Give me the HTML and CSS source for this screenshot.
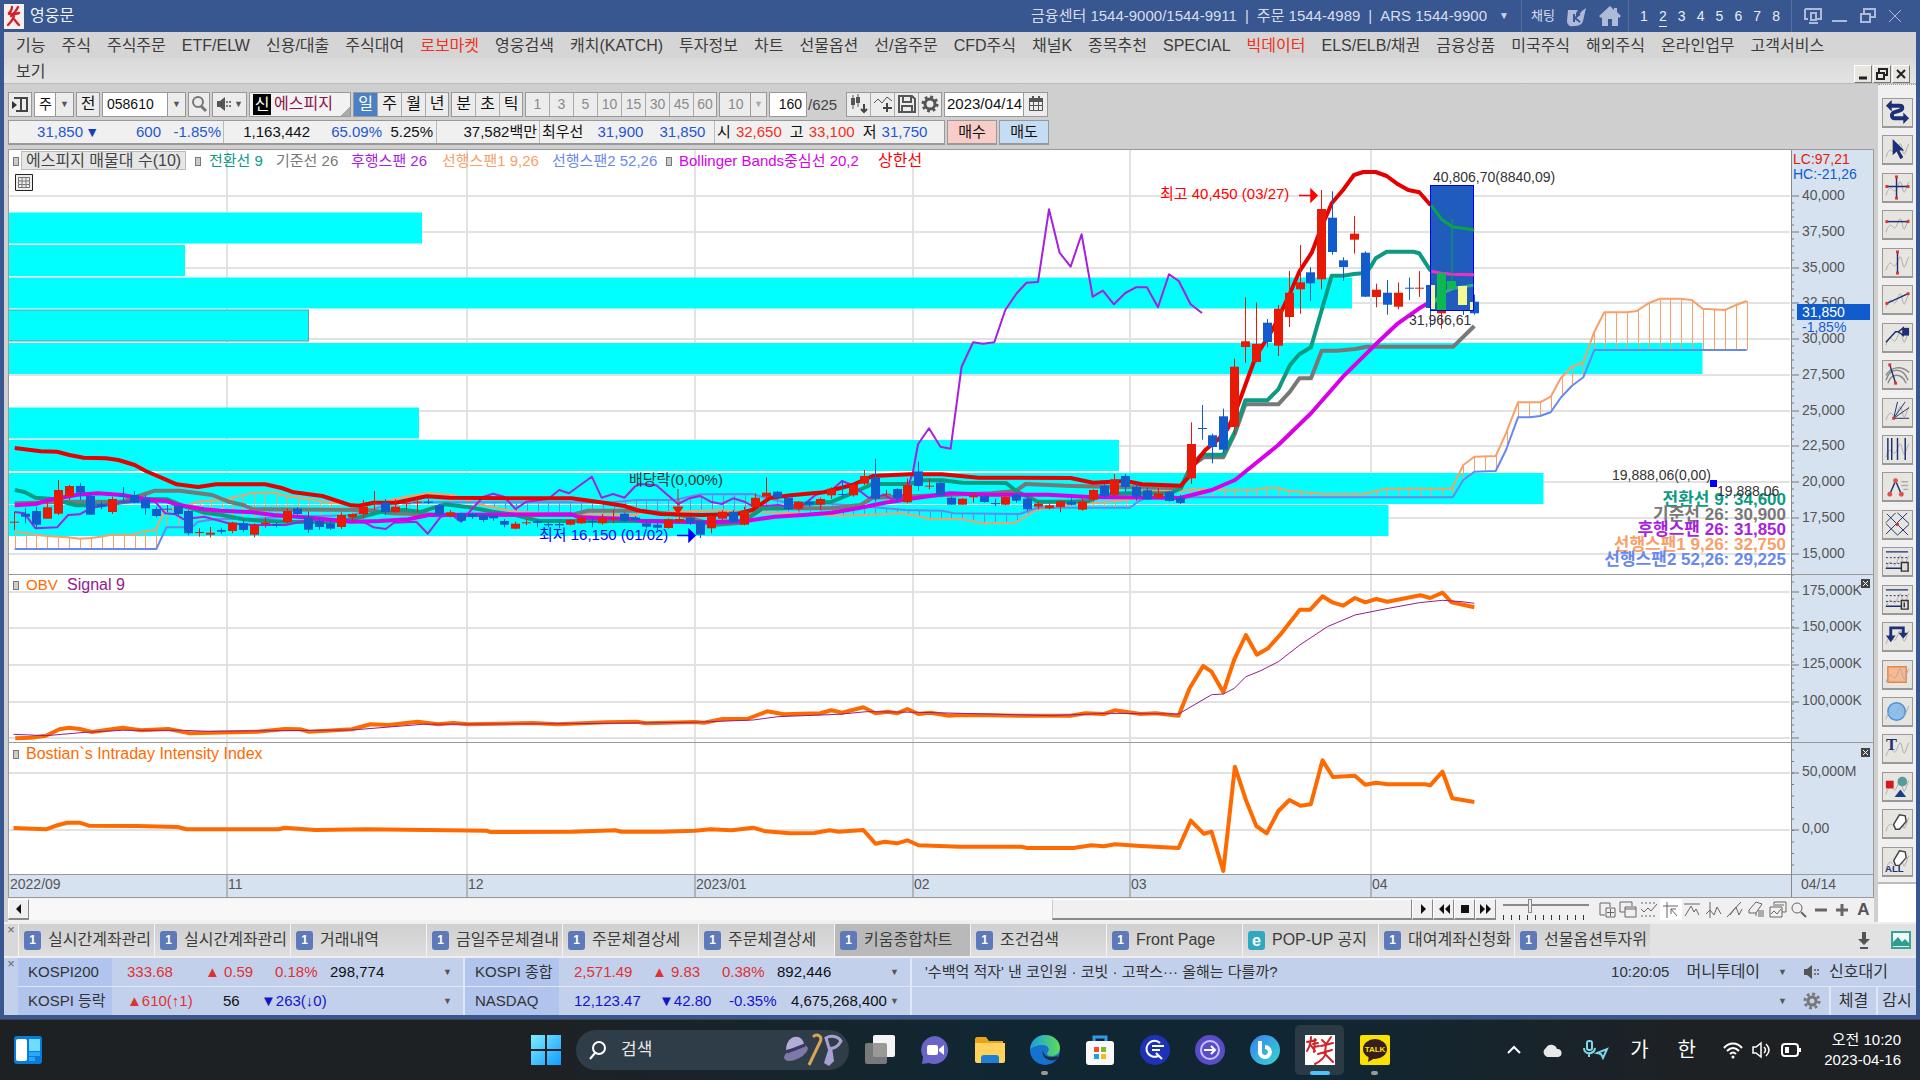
FILE: index.html
```html
<!DOCTYPE html>
<html lang="ko">
<head>
<meta charset="utf-8">
<meta name="viewport" content="width=device-width, initial-scale=1">
<title>영웅문</title>
<link rel="stylesheet" href="styles.css">
</head>
<body>
<div class="window">
  <header class="titlebar">
    <svg class="logo" viewBox="0 0 20 25"><path fill="#f6efee" d="M0 0h20v25H0z"/><path fill="none" stroke="#d3222a" stroke-width="2.4" stroke-linecap="round" d="M8 3c0 3-2 5-3 7m9-7c-2 4-4 7-7 9m-2-3c4 2 7 1 10 0M10 9c1 5-3 9-6 12m5-7c2 2 4 5 6 7"/></svg>
    <span class="app-name">영웅문</span>
    <span class="phones"><span>금융센터 1544-9000/1544-9911</span><span>|</span><span>주문 1544-4989</span><span>|</span><span>ARS 1544-9900</span></span>
    <span class="caret light">▼</span>
    <div class="title-group">
      <a href="#chat" class="chat">채팅</a>
      <svg width="20" height="22" viewBox="0 0 20 22"><path fill="#aebbd8" d="M1 5h10l-2 3v5l6-7 4-3-3 13c-1 4-5 5-9 5-4 1-7-1-7-5z"/><path stroke="#385690" stroke-width="2" fill="none" d="M7 9v8m6-8-5 4 5 4"/></svg>
      <svg width="22" height="20" viewBox="0 0 22 20"><path fill="#aebbd8" d="M11 0 0 10l2 2 1-1v9h6v-7h4v7h6v-9l1 1 2-2-4-4V2h-3v2z"/></svg>
    </div>
    <nav class="screens"><a href="#1">1</a><a href="#2" class="on">2</a><a href="#3">3</a><a href="#4">4</a><a href="#5">5</a><a href="#6">6</a><a href="#7">7</a><a href="#8">8</a></nav>
    <div class="win-buttons">
      <button aria-label="화면"><svg width="18" height="18" viewBox="0 0 18 18"><path fill="none" stroke="#aebbd8" stroke-width="2" d="M1 2h16v10h-4M1 2v10h3M7 6h5v7H7zM5 16h9"/></svg></button>
      <button aria-label="최소화"><svg width="18" height="18" viewBox="0 0 18 18"><path stroke="#aebbd8" stroke-width="2" d="M1 14h15"/></svg></button>
      <button aria-label="복원"><svg width="18" height="18" viewBox="0 0 18 18"><path fill="none" stroke="#aebbd8" stroke-width="2" d="M5 6V2h11v8h-4M2 7h9v8H2z"/></svg></button>
      <button aria-label="닫기"><svg width="18" height="18" viewBox="0 0 18 18"><path stroke="#aebbd8" stroke-width="1" d="M3 3l12 12M15 3 3 15"/></svg></button>
    </div>
  </header>

  <nav class="menu">
    <a href="#m">기능</a><a href="#m">주식</a><a href="#m">주식주문</a><a href="#m">ETF/ELW</a><a href="#m">신용/대출</a><a href="#m">주식대여</a><a href="#m" class="hot">로보마켓</a><a href="#m">영웅검색</a><a href="#m">캐치(KATCH)</a><a href="#m">투자정보</a><a href="#m">차트</a><a href="#m">선물옵션</a><a href="#m">선/옵주문</a><a href="#m">CFD주식</a><a href="#m">채널K</a><a href="#m">종목추천</a><a href="#m">SPECIAL</a><a href="#m" class="hot">빅데이터</a><a href="#m">ELS/ELB/채권</a><a href="#m">금융상품</a><a href="#m">미국주식</a><a href="#m">해외주식</a><a href="#m">온라인업무</a><a href="#m">고객서비스</a>
  </nav>
  <div class="menu-second">
    <a href="#m">보기</a>
    <div class="mdi">
      <button aria-label="창 최소화"><svg width="16" height="16" viewBox="0 0 16 16"><path stroke="#222" stroke-width="3" d="M4 12h8"/></svg></button>
      <button aria-label="창 복원"><svg width="16" height="16" viewBox="0 0 16 16"><path fill="none" stroke="#222" stroke-width="2" d="M5 6V3h8v6h-3M3 7h7v6H3z"/></svg></button>
      <button aria-label="창 닫기"><svg width="16" height="16" viewBox="0 0 16 16"><path stroke="#222" stroke-width="2" d="M4 4l8 8m0-8-8 8"/></svg></button>
    </div>
  </div>

  <main class="workspace">
    <section class="work">
      <div class="toolbar">
        <button class="tb w24" aria-label="목록"><svg width="18" height="18" viewBox="0 0 18 18"><path fill="none" stroke="#444" stroke-width="2" d="M5 3h11v13H5M10 3v13M3 3h13"/><path fill="#333" d="M1 6l5 4-5 4z"/></svg></button>
        <span class="combo w40"><select aria-label="구분"><option>주</option></select><i class="caret">▼</i></span>
        <button class="tb w24">전</button>
        <span class="combo w86"><input aria-label="종목코드" value="058610"><i class="caret">▼</i></span>
        <button class="tb w22" aria-label="검색"><svg width="18" height="18" viewBox="0 0 18 18"><circle cx="8" cy="7" r="5" fill="none" stroke="#777" stroke-width="2"/><path stroke="#777" stroke-width="3" d="M11 11l5 5"/></svg></button>
        <button class="tb w35" aria-label="소리"><svg width="16" height="16" viewBox="0 0 16 16"><path fill="#555" d="M1 5h3l5-4v14l-5-4H1z"/><path stroke="#777" stroke-width="2" stroke-dasharray="2 2" d="M11 5v8M14 5v8"/></svg><i class="caret small">▼</i></button>
        <span class="stock"><b>신</b>에스피지</span>
        <span class="seg big"><button class="on">일</button><button>주</button><button>월</button><button>년</button></span>
        <span class="seg big"><button>분</button><button>초</button><button>틱</button></span>
        <span class="seg dim"><button>1</button><button>3</button><button>5</button><button>10</button><button>15</button><button>30</button><button>45</button><button>60</button></span>
        <span class="combo dim w48"><select aria-label="간격"><option>10</option></select><i class="caret">▼</i></span>
        <span class="count"><input aria-label="봉 개수" value="160"></span><span class="total">/625</span>
        <span class="seg icons">
          <button aria-label="지표 추가"><svg width="20" height="20" viewBox="0 0 20 20"><path stroke="#555" stroke-width="1" d="M4 1v14M9 0v13"/><path fill="#555" d="M2 4h4v7H2zM7 3h4v6H7z"/><path fill="none" stroke="#444" stroke-width="2" d="M15 10v8m-3-3 3 3 3-3"/></svg></button>
          <button aria-label="비교"><svg width="20" height="20" viewBox="0 0 20 20"><path fill="none" stroke="#555" d="M1 9l4-4 4 4 5-6 5 4"/><path stroke="#444" stroke-width="2" d="M14 9v9m-4-4h9"/></svg></button>
          <button aria-label="저장"><svg width="18" height="18" viewBox="0 0 18 18"><path fill="none" stroke="#555" stroke-width="2" d="M1 1h13l3 3v13H1zM5 1v6h8V1M4 17v-6h10v6"/></svg></button>
          <button aria-label="설정"><svg width="18" height="18" viewBox="0 0 18 18"><circle cx="9" cy="9" r="5" fill="none" stroke="#555" stroke-width="3"/><circle cx="9" cy="9" r="7" fill="none" stroke="#555" stroke-width="3" stroke-dasharray="2.7 2.8"/></svg></button>
        </span>
        <span class="date"><input aria-label="날짜" value="2023/04/14"><button aria-label="달력"><svg width="16" height="16" viewBox="0 0 16 16"><path fill="none" stroke="#555" d="M1.500 3.500h13v11h-13zM5.500 6v8M10.500 6v8M2 9.500h12"/><path fill="#555" d="M1 2h14v4H1zM4 0h2v3H4zM10 0h2v3h-2z"/></svg></button></span>
      </div>

      <div class="quote">
        <div class="quote-box">
          <div class="cell"><span class="dn w78">31,850</span><span class="dn arrow">▼</span><span class="dn w62">600</span><span class="dn w60">-1.85%</span></div>
          <div class="cell"><span class="w86">1,163,442</span><span class="dn w72">65.09%</span><span class="w50">5.25%</span></div>
          <div class="cell"><span class="w98">37,582백만</span></div>
          <div class="cell"><span>최우선</span><span class="dn w56">31,900</span><span class="dn w62">31,850</span></div>
          <div class="cell last"><span>시</span><span class="up w50">32,650</span><span class="gap">고</span><span class="up w50">33,100</span><span class="gap">저</span><span class="dn w50">31,750</span></div>
        </div>
        <button class="buy">매수</button><button class="sell">매도</button>
      </div>

      <svg id="chart" class="chart" viewBox="8 149 1866 749" role="img" aria-label="에스피지 일봉 차트"></svg>

      <div class="scroller">
        <button class="raised" aria-label="왼쪽"><svg width="14" height="14" viewBox="0 0 14 14"><path fill="#111" d="M9 2v10L4 7z"/></svg></button>
        <div class="track"><div class="thumb"></div></div>
        <button class="raised" aria-label="오른쪽"><svg width="14" height="14" viewBox="0 0 14 14"><path fill="#111" d="M5 2v10l5-5z"/></svg></button>
        <button class="raised" aria-label="뒤로"><svg width="14" height="14" viewBox="0 0 14 14"><path fill="#111" d="M7 2v10L2 7zM13 2v10L8 7z"/></svg></button>
        <button class="raised" aria-label="정지"><svg width="14" height="14" viewBox="0 0 14 14"><path fill="#111" d="M3 3h8v8H3z"/></svg></button>
        <button class="raised" aria-label="앞으로"><svg width="14" height="14" viewBox="0 0 14 14"><path fill="#111" d="M1 2v10l5-5zM7 2v10l5-5z"/></svg></button>
        <input class="speed" type="range" min="0" max="10" value="3" aria-label="속도">
        <div class="minis">
          <button aria-label="추가"><svg viewBox="0 0 18 18"><path d="M12 6V2H2v12h5M8 7h9v9H8zM12.500 8v7M9 11.500h7"/></svg></button>
          <button aria-label="겹치기"><svg viewBox="0 0 18 18"><path d="M6 11H1V1h12v4M6 6h11v10H6zM6 8h11"/></svg></button>
          <button aria-label="범위"><svg viewBox="0 0 18 18"><path stroke-dasharray="2 2" d="M1 2h16M1 15h16"/><path d="M1 8l3 3 4-4 3 3 6-7"/></svg></button>
          <button aria-label="십자선" class="pressed"><svg viewBox="0 0 18 18"><path d="M5 1v16M1 5h15M15 15 9 8m0 5V8h5"/></svg></button>
          <button aria-label="수평선"><svg viewBox="0 0 18 18"><path d="M1 3h16M2 15l6-10 3 6 2-3 3 6"/></svg></button>
          <button aria-label="수직선"><svg viewBox="0 0 18 18"><path d="M5 1v16M1 13l4-4 4 5 3-8 4 7"/></svg></button>
          <button aria-label="추세선"><svg viewBox="0 0 18 18"><path d="M1 16 15 1M4 14l6-8 3 8 3-6"/></svg></button>
          <button aria-label="모두 지우기"><svg viewBox="0 0 18 18"><path d="M2 9 9 1l6 2-6 9H2zM9 12v3M12 9v7m2-7v7m2-7v7"/></svg></button>
          <button aria-label="차트 겹침"><svg viewBox="0 0 18 18"><path d="M5 5V1h12v10h-4M1 6h12v10H1zM2 13l3-3 3 3 4-5M6 4h9"/></svg></button>
          <button aria-label="확대"><svg viewBox="0 0 18 18"><circle cx="7" cy="7" r="5"/><path stroke-width="2" d="M11 11l5 5"/></svg></button>
          <button aria-label="축소"><svg viewBox="0 0 18 18"><path stroke-width="3" d="M3 9h12"/></svg></button>
          <button aria-label="늘리기"><svg viewBox="0 0 18 18"><path stroke-width="3" d="M3 9h12M9 3v12"/></svg></button>
          <button aria-label="자동"><b>A</b></button>
        </div>
      </div>
    </section>
    <aside class="side"><div class="tools" id="tools"></div></aside>
  </main>

  <nav class="tabs">
    <span class="grip">×</span>
    <a href="#t"><i>1</i>실시간계좌관리</a><a href="#t"><i>1</i>실시간계좌관리</a><a href="#t"><i>1</i>거래내역</a><a href="#t"><i>1</i>금일주문체결내</a><a href="#t"><i>1</i>주문체결상세</a><a href="#t"><i>1</i>주문체결상세</a><a href="#t" class="on"><i>1</i>키움종합차트</a><a href="#t"><i>1</i>조건검색</a><a href="#t"><i>1</i>Front Page</a><a href="#t"><i class="web">e</i>POP-UP 공지</a><a href="#t"><i>1</i>대여계좌신청화</a><a href="#t"><i>1</i>선물옵션투자위</a>
    <span class="tabs-end">
      <svg width="14" height="18" viewBox="0 0 14 18"><path fill="#555" d="M5 1h4v7h4l-6 6-6-6h4zM3 16h8v2H3z"/></svg>
      <svg width="20" height="18" viewBox="0 0 20 18"><path fill="#eefaf8" stroke="#3aa394" stroke-width="2" d="M1 1h18v16H1z"/><path fill="#2e9f8e" d="M2 15v-4l5-5 4 5 3-3 4 4v3z"/></svg>
    </span>
  </nav>

  <section class="ticker">
    <span class="grip">×</span>
    <div class="index"><b>KOSPI200</b><span class="up2">333.68</span><span class="up2 s2">▲ 0.59</span><span class="up2 s3">0.18%</span><span class="s4">298,774</span><i class="caret">▼</i></div>
    <div class="index"><b>KOSPI 종합</b><span class="up2">2,571.49</span><span class="up2 s2">▲ 9.83</span><span class="up2 s3">0.38%</span><span class="s4">892,446</span><i class="caret">▼</i></div>
    <div class="news"><a href="#n">'수백억 적자' 낸 코인원 · 코빗 · 고팍스··· 올해는 다를까?</a><time>10:20:05</time><span class="src">머니투데이</span><i class="caret">▼</i><svg width="18" height="16" viewBox="0 0 18 16"><path fill="#555" d="M1 5h3l5-4v14l-5-4H1z"/><path stroke="#777" stroke-width="2" stroke-dasharray="2 2" d="M12 5v8M15 5v8"/></svg><span class="sig">신호대기</span></div>
    <div class="index"><b>KOSPI 등락</b><span class="up2 u2">▲610(↑1)</span><span class="u3">56</span><span class="dn2">▼263(↓0)</span><i class="caret">▼</i></div>
    <div class="index"><b>NASDAQ</b><span class="dn2">12,123.47</span><span class="dn2 s5">▼42.80</span><span class="dn2 s6">-0.35%</span><span class="s7">4,675,268,400</span><i class="caret">▼</i></div>
    <div class="news"><span class="fill"></span><i class="caret">▼</i><svg width="18" height="18" viewBox="0 0 18 18"><circle cx="9" cy="9" r="4" fill="none" stroke="#777" stroke-width="3"/><circle cx="9" cy="9" r="7" fill="none" stroke="#777" stroke-width="3" stroke-dasharray="2.7 2.8"/></svg><a href="#a" class="foot">체결</a><a href="#b" class="foot">감시</a></div>
  </section>
</div>

<footer class="taskbar">
  <div class="tk-left"><button aria-label="위젯"><svg width="30" height="30" viewBox="0 0 30 30"><rect x="1" y="1" width="28" height="28" rx="3" fill="#0c7bd6"/><rect x="3" y="4" width="11" height="22" rx="2" fill="#fff"/><path fill="#6fdcff" d="M16 4h11v12H16z"/><path fill="#28a8ff" d="M16 17h11v4H16zM16 22h6v4h-6z"/></svg></button></div>
  <div class="tk-center">
    <button aria-label="시작"><svg width="30" height="30" viewBox="0 0 30 30"><defs><linearGradient id="wn" x2="1" y2="1"><stop stop-color="#7fecff"/><stop offset="1" stop-color="#119bff"/></linearGradient></defs><path fill="url(#wn)" d="M0 0h14v14H0zM16 0h14v14H16zM0 16h14v14H0zM16 16h14v14H16z"/></svg></button>
    <label class="search"><svg width="20" height="20" viewBox="0 0 20 20"><circle cx="11" cy="8" r="6" fill="none" stroke="#fff" stroke-width="2"/><path stroke="#fff" stroke-width="2" d="M7 13l-5 6"/></svg><input placeholder="검색" aria-label="검색"><svg width="60" height="34" viewBox="0 0 60 34"><ellipse cx="13" cy="20" rx="13" ry="6" fill="#7d78a8" transform="rotate(-28 13 20)"/><path fill="#b4acd8" d="M3 17c0-14 13-17 17-9l2 5z"/><path stroke="#3b375f" stroke-width="3" d="M4 19l18-7"/><path fill="none" stroke="#d9a35a" stroke-width="3" d="M26 32 37 9c3-6-3-9-7-5"/><path fill="none" stroke="#a9a0d2" stroke-width="3" d="M43 5c5-3 12-2 15 3-3 6-8 8-12 7z"/><path fill="#a9a0d2" d="M46 14l-5 16 5 3 5-5-2-14z"/></svg></label>
    <button aria-label="작업 보기"><svg width="30" height="30" viewBox="0 0 30 30"><rect x="8" width="22" height="22" rx="2" fill="#f4f4f4"/><rect y="8" width="22" height="21" rx="2" fill="#888" opacity=".85"/></svg></button>
    <button aria-label="채팅"><svg width="30" height="30" viewBox="0 0 30 30"><path fill="#6a64c8" d="M15 1a14 14 0 1 1-6 27l-7 1 1-7A14 14 0 0 1 15 1z"/><rect x="7" y="10" width="11" height="10" rx="2" fill="#fff"/><path fill="#fff" d="M19 14l5-4v10l-5-4z"/></svg></button>
    <button aria-label="탐색기"><svg width="30" height="30" viewBox="0 0 30 30"><path fill="#e9a21c" d="M0 4c0-1 1-2 2-2h9l3 4h14v8H0z"/><path fill="#ffd25e" d="M0 8h30v18c0 1-1 2-2 2H2c-1 0-2-1-2-2z"/><path fill="#1d7fd6" d="M6 28v-5c0-2 1-3 3-3h12c2 0 3 1 3 3v5z"/></svg></button>
    <button aria-label="Edge" class="run"><svg width="30" height="30" viewBox="0 0 30 30"><defs><linearGradient id="eg" x2="1"><stop stop-color="#1b9de2"/><stop offset="1" stop-color="#5fdc55"/></linearGradient></defs><circle cx="15" cy="15" r="15" fill="#1573cf"/><path fill="url(#eg)" d="M0 14C1 5 8 0 15 0c9 0 15 6 15 13 0 5-4 8-8 8-5 0-6-2-4-4 2-3 0-7-5-7C8 10 3 12 0 14z"/><path fill="#1e2c36" d="M13 15c0 6 6 9 14 6l1 2c-3 3-8 3-11 1-4-2-5-6-4-9z"/></svg></button>
    <button aria-label="스토어"><svg width="30" height="30" viewBox="0 0 30 30"><path fill="none" stroke="#2d9de8" stroke-width="3" d="M9 8V2h12v6"/><rect x="1" y="6" width="28" height="24" rx="3" fill="#f8f8f8"/><path fill="#f04f26" d="M9 12h5v5H9z"/><path fill="#7db82b" d="M16 12h5v5h-5z"/><path fill="#18a3e8" d="M9 19h5v5H9z"/><path fill="#fbb813" d="M16 19h5v5h-5z"/></svg></button>
    <button aria-label="검색 앱"><svg width="30" height="30" viewBox="0 0 30 30"><circle cx="15" cy="15" r="15" fill="#1e32b8"/><path fill="none" stroke="#fff" stroke-width="2" d="M20 8a8 8 0 1 0-2 13M16 18l6 6M12 11h12M12 15h8"/></svg></button>
    <button aria-label="전송"><svg width="30" height="30" viewBox="0 0 30 30"><circle cx="15" cy="15" r="15" fill="#5a4cc8"/><circle cx="15" cy="15" r="9" fill="none" stroke="#c9c2ff" stroke-width="2"/><path fill="none" stroke="#fff" stroke-width="2" d="M9 15h11m-4-4 4 4-4 4"/></svg></button>
    <button aria-label="빅스비"><svg width="30" height="30" viewBox="0 0 30 30"><defs><linearGradient id="bx" x2="1" y2="1"><stop stop-color="#3a7ff0"/><stop offset="1" stop-color="#35d8d0"/></linearGradient></defs><circle cx="15" cy="15" r="15" fill="url(#bx)"/><path fill="none" stroke="#fff" stroke-width="4" d="M10 6v10a5 5 0 1 0 5-4"/></svg></button>
    <button aria-label="영웅문" class="active"><svg width="30" height="30" viewBox="0 0 30 30"><path fill="#fff" d="M0 0h30v30H0z"/><path fill="none" stroke="#d3222a" stroke-width="2" stroke-linecap="round" d="M2 7l9-2M6 2C6 8 4 13 2 16m3-7 5 7M10 4l-1 13M8 9l5-1m-4 4 5-1M17 5l3 3m6-6-4 6m-6 3 12-3m-7 1-1 9m-7 1 14-4m-6 2c0 4-5 9-11 12m9-11 9 9"/></svg></button>
    <button aria-label="카카오톡" class="run"><svg width="30" height="30" viewBox="0 0 30 30"><rect width="30" height="30" rx="2" fill="#fae100"/><ellipse cx="15" cy="14" rx="12" ry="10" fill="#371d1e"/><path fill="#371d1e" d="M9 20l-1 7 7-4z"/><text x="15" y="17" text-anchor="middle" font-size="8" font-weight="bold" fill="#fae100">TALK</text></svg></button>
  </div>
  <div class="tk-right">
    <svg width="14" height="10" viewBox="0 0 14 10"><path fill="none" stroke="#fff" stroke-width="2" d="M1 8l6-6 6 6"/></svg>
    <svg width="20" height="14" viewBox="0 0 20 14"><path fill="#e8e8e8" d="M5 14a5 5 0 0 1-1-9 6 6 0 0 1 11 1 4 4 0 0 1 1 8z"/></svg>
    <svg width="26" height="20" viewBox="0 0 26 20"><rect x="4" y="1" width="5" height="9" rx="2" fill="none" stroke="#7fd6e8" stroke-width="2"/><path fill="none" stroke="#7fd6e8" stroke-width="2" d="M1 8c0 7 10 7 11 0M6 14v3M24 9l-4 9-2-4-4-1z"/></svg>
    <span>가</span><span>한</span>
    <svg class="near" width="20" height="18" viewBox="0 0 20 18"><path fill="none" stroke="#fff" stroke-width="2" d="M1 7c5-6 13-6 18 0M4 10c4-4 8-4 12 0M7 13c2-2 4-2 6 0"/><circle cx="10" cy="16" r="1.500" fill="#fff"/></svg>
    <svg class="near" width="20" height="18" viewBox="0 0 20 18"><path fill="none" stroke="#fff" stroke-width="1.500" d="M1 6h3l5-4v14l-5-4H1zM12 6c2 2 2 4 0 6M14 3c4 4 4 8 0 12"/></svg>
    <svg class="near" width="20" height="16" viewBox="0 0 20 16"><rect x="1" y="2" width="16" height="12" rx="3" fill="none" stroke="#fff" stroke-width="2"/><path fill="#fff" d="M4 5h4v6H4zM18 6h2v4h-2z"/></svg>
    <div class="clock"><span>오전 10:20</span><span>2023-04-16</span></div>
  </div>
</footer>
<script src="chart.js"></script>
</body>
</html>
```
FILE: styles.css
```css
* { box-sizing: border-box; }
body {
  margin: 0;
  min-height: 100vh;
  display: flex;
  flex-direction: column;
  background: #1e2124;
  font: 16px/20px "Liberation Sans", "Noto Sans CJK KR", sans-serif;
  color: #3c3c3c;
}
a { color: inherit; text-decoration: none; white-space: nowrap; }
button, input, select { font: inherit; color: inherit; padding: 0; margin: 0; border: 0; background: none; border-radius: 0; }
button { display: inline-flex; align-items: center; justify-content: center; }
svg { flex: none; }
.caret { font-style: normal; font-size: 9px; line-height: 12px; color: #555; flex: none; }
.caret.light { color: #c8d2e6; font-size: 10px; }

.window { flex: 1; display: flex; flex-direction: column; background: #385690; padding: 0 4px 4px; border-bottom: 1px solid #444; }

/* title bar */
.titlebar { display: flex; align-items: center; height: 32px; color: #d6deee; }
.logo { width: 20px; height: 25px; margin-right: 6px; }
.app-name { font-size: 16px; color: #f0f3f9; }
.phones { display: flex; gap: 8px; margin-left: auto; font-size: 15px; white-space: nowrap; }
.titlebar > .caret { width: 34px; text-align: center; }
.title-group { display: flex; align-items: center; gap: 12px; width: 107px; height: 32px; padding-left: 9px; border-left: 1px solid #55709f; }
.chat { font-size: 13px; }
.screens { display: flex; width: 164px; height: 32px; align-items: center; justify-content: space-between; padding: 0 11px; border: solid #55709f; border-width: 0 1px; font-size: 14px; color: #e8edf6; }
.screens .on { border-bottom: 1px solid #e8edf6; }
.win-buttons { display: flex; justify-content: space-between; width: 124px; padding: 0 12px; }

/* menu */
.menu { display: flex; gap: 16px; height: 26px; padding: 4px 12px 0; background: #d5d5d5; overflow: hidden; }
.hot { color: #f03020; }
.menu-second { display: flex; justify-content: space-between; height: 26px; padding: 4px 6px 0 12px; background: linear-gradient(#d9d9d9, #e3e3e3); border-bottom: 1px solid #bbb; }
.mdi { display: flex; align-items: flex-end; gap: 1px; }
.mdi button { width: 18px; height: 18px; background: #e8e6df; border: 1px solid; border-color: #fff #777 #777 #fff; }

/* work area */
.workspace { display: flex; background: #cfcfcf; }
.work { flex: 1; min-width: 0; }
.toolbar { display: flex; align-items: center; gap: 2px; height: 36px; padding: 7px 4px 3px; color: #111; }
.toolbar > * { height: 25px; flex: none; border: 1px solid #999; background: #ececec; }
.toolbar > .total { border: 0; background: none; font-size: 15px; width: 36px; padding: 3px 0; color: #444; margin-left: -1px; }
.w22 { width: 22px; } .w24 { width: 24px; } .w35 { width: 35px; } .w40 { width: 40px; }
.w48 { width: 48px; } .w86 { width: 84px; }
.small { margin-left: 2px; }
.combo { display: flex; align-items: center; background: #fff; }
.combo input, .combo select { flex: 1; min-width: 0; padding-left: 4px; appearance: none; font-size: 14px; height: 100%; }
.combo .caret { width: 18px; height: 23px; line-height: 23px; text-align: center; background: #ececec; border-left: 1px solid #999; }
.combo.dim, .combo.dim select, .seg.dim { color: #8a8a8a; background: #ececec; }
.combo.dim select { padding-left: 8px; font-size: 14px; }
.combo.dim .caret { color: #aaa; width: 16px; }
.stock { display: flex; align-items: center; gap: 3px; width: 102px; padding-left: 3px; color: #90104a; background: linear-gradient(135deg, #f2f2f2 92%, #aaa 92%) !important; }
.stock b { width: 18px; line-height: 21px; background: #000; color: #fff; font-weight: 400; text-align: center; }
.seg { display: flex; }
.seg button { width: 24px; border-right: 1px solid #aaa; font-size: 15px; }
.seg.dim button { width: 24px; font-size: 14px; }
.seg button:last-child { border-right: 0; width: 22px; }
.seg .on { background: #4a80c4; color: #fff; }
.seg.big button { font-size: 16px; }
.count { width: 38px; background: #fff !important; }
.count input { width: 100%; height: 100%; text-align: right; padding-right: 4px; font-size: 14px; }
.date { display: flex; background: #fff !important; width: 104px; }
.date input { flex: 1; min-width: 0; padding-left: 2px; font-size: 15px; }
.date button { width: 24px; border-left: 1px solid #999; background: #ececec; }

.quote { display: flex; gap: 2px; height: 29px; padding: 0 4px 4px; font-size: 15px; color: #111; }
.quote-box { display: flex; width: 937px; background: #f0f0f0; border: 1px solid #999; border-bottom-width: 2px; }
.cell { display: flex; align-items: center; padding: 0 2px; border-right: 1px solid #bbb; white-space: nowrap; }
.cell span { text-align: right; flex: none; }
.cell.last { border: 0; flex: 1; }
.cell:nth-child(1) { width: 215px; } .cell:nth-child(2) { width: 213px; }
.cell:nth-child(3) { width: 103px; } .cell:nth-child(4) { width: 175px; }
.w78 { width: 72px; } .cell .arrow { width: 16px; font-size: 14px; color: #1040c0; }
.w62 { width: 62px; } .w60 { width: 60px; } .cell .w86 { width: 84px; } .w72 { width: 72px; } .w50 { width: 51px; } .w98 { width: 98px; } .w56 { width: 60px; }
.gap { margin-left: 8px; }
.up { color: #f03020; } .dn { color: #2457d0; }
.buy, .sell { width: 50px; font-size: 15px; border: 1px solid #999; border-bottom-width: 2px; background: #f8cdc8; }
.sell { background: #c4dcf4; }

.chart { display: block; width: calc(100% - 8px); height: auto; margin-left: 4px; }
.chart text { font: 15px "Liberation Sans", "Noto Sans CJK KR", sans-serif; }
.chart .axis text { font-size: 14px; fill: #555; }
.chart .value { font-size: 14px; }
.chart .wide { font-size: 16px; }
.chart .summary text { font-size: 17px; font-weight: bold; text-anchor: end; }

.scroller { display: flex; height: 24px; margin: 0 4px; padding: 1px 0 2px; background: #f0f0f0; align-items: stretch; }
.raised { width: 21px; background: #f0f0f0; border: 1px solid; border-color: #fff #888 #888 #fff; border-bottom-width: 2px; }
.track { flex: 1; background: #f8f8f8; display: flex; justify-content: flex-end; }
.thumb { width: 26%; background: #f0f0f0; border: 1px solid; border-color: #fff #888 #888 #ccc; border-bottom-width: 2px; }
.speed { appearance: none; width: 86px; margin: 0 7px; background: repeating-linear-gradient(90deg, #333 0 1px, transparent 1px 8px) 0 100% / 100% 5px no-repeat, linear-gradient(#888, #888) 0 5px / 100% 2px no-repeat; }
.speed::-webkit-slider-thumb { appearance: none; width: 4px; height: 14px; margin-bottom: 8px; background: #eee; border: 1px solid #888; }
.minis { display: flex; width: 278px; }
.minis button { flex: 1; }
.minis svg { width: 18px; height: 18px; fill: none; stroke: #666; stroke-width: 1; }
.minis b { color: #555; font-size: 17px; }
.pressed { background: #fff; }

.side { width: 38px; background: #fff; padding-bottom: 38px; display: flex; }
.tools { flex: 1; display: flex; flex-direction: column; justify-content: space-between; align-items: center; padding: 13px 0 5px; background: #f0f0f0; border-bottom: 2px solid #bbb; border-top: 1px dotted #999; }
.tools button { width: 31px; height: 30px; background: #e6e5e0; border: 1px solid #999; border-bottom-width: 2px; }
.tools svg { width: 27px; height: 27px; fill: none; stroke: #1c2f78; stroke-width: 1.5; }

/* document tabs */
.tabs { display: flex; height: 36px; background: #e2e2e2; border-top: 2px solid #eee; border-bottom: 2px solid #eee; overflow: hidden; }
.grip { width: 14px; background: #d8d8d8; font-size: 13px; line-height: 12px; text-align: center; color: #666; }
.tabs a { flex: 0 1 136px; min-width: 0; overflow: hidden; display: flex; align-items: center; gap: 7px; padding-left: 5px; border-left: 1px solid #f4f4f4; background: linear-gradient(#cfcfcf, #dedede); }
.tabs a.on { background: #b9b9b9; }
.tabs i { flex: none; width: 17px; line-height: 19px; border-radius: 3px; background: #5e79b8; color: #fff; font-size: 12px; font-style: normal; font-weight: bold; text-align: center; }
.tabs .web { background: #30a8c0; font-size: 16px; }
.tabs-end { margin-left: auto; display: flex; align-items: center; gap: 20px; padding-right: 5px; }

/* index ticker */
.ticker { display: grid; grid-template-columns: 14px 447px 447px 1fr; grid-auto-rows: 28px; gap: 1px 0; background: #dfe6f4; font-size: 15px; color: #333; }
.ticker .grip { grid-row: span 2; background: #c2d0ec; }
.index, .news { display: flex; align-items: center; background: #c2d0ec; border-right: 2px solid #dfe6f4; white-space: nowrap; min-width: 0; }
.index b { width: 94px; padding-left: 10px; margin-right: 15px; line-height: 28px; background: #b0c4ee; font-weight: 400; flex: none; }
.index span { flex: none; color: #111; }
.index > .caret { margin-left: auto; padding-right: 11px; }
.index .up2 { color: #e03030; width: 62px; } .index .dn2 { color: #1414c8; }
.index .s2 { width: 70px; margin-left: 16px; } .index .s3 { width: 55px; }
.index .up2.u2 { width: 96px; }
.index .u3 { width: 38px; }
.index .dn2:nth-child(2) { width: 85px; } .index .s5 { width: 70px; } .index .s6 { width: 62px; }
.news { padding-left: 13px; border: 0; }
.news a:first-child { margin-right: auto; }
.fill { flex: 1; }
.src { margin: 0 18px 0 17px; font-size: 16px; }
.news svg { margin: 0 8px 0 16px; }
.sig { width: 87px; font-size: 16px; }
.foot { width: 47px; line-height: 28px; text-align: center; border-left: 2px solid #dfe6f4; font-size: 16px; }
.foot:last-child { width: 40px; }

/* taskbar */
.taskbar { display: grid; grid-template-columns: 1fr auto 1fr; align-items: center; height: 60px; background: linear-gradient(90deg, #1e2124 28%, #102733 52%, #102733 68%, #1e2124 88%); color: #fff; }
.tk-left { padding-left: 13px; }
.tk-left button { height: 50px; }
.tk-center { display: flex; align-items: center; gap: 6px; }
.tk-center button { position: relative; width: 49px; height: 50px; border-radius: 5px; }
.tk-center .active { background: #2b3b45; }
.run::after, .active::after { content: ""; position: absolute; bottom: 0; width: 7px; height: 4px; border-radius: 2px; background: #999; }
.active::after { width: 20px; background: #4cc2ff; }
.search { display: flex; align-items: center; gap: 13px; width: 273px; height: 40px; padding: 0 6px 0 12px; border-radius: 20px; background: #2e3d47; }
.search input { flex: 1; min-width: 0; font-size: 17px; }
.search input::placeholder { color: #e8e8e8; opacity: 1; }
.tk-right { display: flex; align-items: center; justify-content: flex-end; gap: 21px; padding-right: 19px; font-size: 20px; }
.tk-right > span + span { margin: 0 6px 0 8px; }
.tk-right .near { margin-right: -12px; }
.clock { display: flex; flex-direction: column; align-items: flex-end; width: 82px; margin-left: 9px; font-size: 15px; white-space: nowrap; }
```
FILE: chart.js
```js
const chart = document.getElementById('chart');
const out = [];
const COLOR = { up: '#e71a08', down: '#115bcc', conv: '#0d9a82', base: '#787878', lag: '#a81fe0', spanA: '#f8a068', spanB: '#6888f0', band: '#e60000', mid: '#d800e8', obv: '#ff6a00', grid: '#e2e2e2' };
const STEP = 10.893, FIRST = 14.7;

// Each point list is kept in the units of the section it was sampled in.
const section = (x0, sx, y0) => s => s.trim().split(/\s+/).map(p => { const [x, y] = p.split(','); return [x0 + x / sx, y0 + y / 3]; });
const A = section(0, 2.45, 200), B = section(640, 2.45, 200), C = section(1140, 3, 150), D = section(1500, 3, 140);
const E = section(0, 1.6333, 570), F = section(960, 1.6333, 570);

const line = (pts, color, w) => out.push(`<polyline fill="none" stroke="${color}" stroke-width="${w}" stroke-linejoin="round" points="${pts.map(p => p.map(n => n.toFixed(1)).join()).join(' ')}"/>`);
const rect = (x, y, w, h, fill, extra = '') => out.push(`<rect x="${x}" y="${y}" width="${w}" height="${h}" fill="${fill}" ${extra}/>`);
const text = (x, y, s, fill, extra = '') => out.push(`<text x="${x}" y="${y}" ${fill ? `fill="${fill}"` : ''} ${extra}>${s}</text>`);
const seg = (x1, y1, x2, y2, c, w = 1) => out.push(`<path stroke="${c}" stroke-width="${w}" d="M${x1} ${y1}L${x2} ${y2}"/>`);

rect(8, 149, 1866, 749, '#fff');

// grid
const priceY = p => Math.round(196 + (40000 - p) * 0.0143);
for (let p = 40000; p >= 15000; p -= 2500) seg(9, priceY(p), 1790, priceY(p), COLOR.grid, 2);
[592, 628, 665, 702, 738, 773, 830].forEach(y => seg(9, y, 1790, y, COLOR.grid, 2));
const months = [[227, '11'], [467, '12'], [695, '2023/01'], [913, '02'], [1130, '03'], [1371, '04']];
months.forEach(([x]) => seg(x, 150, x, 874, COLOR.grid, 2));

// volume profile
[[212.5, 422], [245, 185], [277.5, 1352], [310, 308.5], [343, 1702.5], [407.5, 419], [440, 1119], [473, 1543.5], [505, 1388.5]].forEach(([y, x], i) =>
  rect(8, y, x - 8, 31, '#00ffff', i === 3 ? 'stroke="#6a9a9a"' : ''));

// cloud
const spanA = [...A('36,996 60,998 87,1004 115,1008 167,1012 195,1016 222,1014 246,1010 274,1004 326,1004 354,994 381,990 405,930 433,925 470,912 485,905 540,900 568,893 596,885 620,878 670,877 699,888 755,897 806,908 880,915 940,905 993,890 1050,880 1110,885 1170,912 1208,922 1263,935 1343,940 1560,945'),
  ...B('0,938 100,935 190,930 250,935 360,938 440,945 500,948 640,940 680,948 708,956 790,958 840,970 920,968 970,930 1060,912 1110,910 1190,900 1220,895'),
  ...C('0,1024 120,1022 160,1018 260,1020 345,1020 380,1014 415,1014 445,1022 511,1028 549,1032 670,1032 740,1016 935,1016 970,945 1003,920 1067,918 1098,850'),
  ...D('54,787 120,787 152,770 182,715 215,680 250,668 283,575 313,517 380,517 410,513 445,490 480,476 541,476 575,480 608,506 674,510 706,496 740,483')];
const spanB = [...A('36,1047 383,1047 408,982 470,982 485,965 530,957 620,957 700,950 860,946 910,930 960,910 1050,907 1500,907 1560,900'),
  ...B('0,900 85,900 148,883 275,882 308,893 350,905 470,912 560,920 650,930 740,932 770,940 930,942 975,923 1200,923 1220,905'),
  ...C('20,1042 938,1042 970,990 1003,965 1067,963 1098,900'),
  ...D('54,832 90,832 120,828 152,817 182,773 215,738 250,712 283,630 740,630')];
const at = (pts, x) => {
  for (let i = 1; i < pts.length; i++) if (pts[i][0] >= x) {
    const [a, b] = [pts[i - 1], pts[i]];
    return a[1] + (b[1] - a[1]) * (x - a[0]) / (b[0] - a[0] || 1);
  }
  return pts[pts.length - 1][1];
};
for (let i = 0; i < 160; i++) {
  const x = Math.round(FIRST + i * STEP) + 0.5, a = at(spanA, x), b = at(spanB, x);
  seg(x, a.toFixed(1), x, b.toFixed(1), a < b ? COLOR.spanA : COLOR.spanB);
}
line(spanA, COLOR.spanA, 2);
line(spanB, COLOR.spanB, 2);

line([...A('36,910 180,905 300,905 340,888 380,872 440,872 520,885 560,905 596,915 620,928 900,930 960,940 1100,945 1400,945 1440,932 1560,932'),
  ...B('0,932 100,945 180,975 250,968 300,925 470,925 540,915 570,893 860,880 920,873 945,852 1060,858 1325,865 1349,800 1380,773'),
  ...C('187,922 250,922 285,850 316,763 415,763 450,725 478,685 513,685 545,602 590,602 645,597 680,590 940,590 1003,528')], COLOR.base, 4);
line([...A('36,870 60,876 87,893 130,897 185,916 250,916 310,905 354,897 410,898 450,918 500,938 540,944 596,958 640,962 700,965 800,966 850,960 887,950 940,933 990,930 1030,936 1090,913 1150,922 1208,935 1263,945 1320,963 1560,963'),
  ...B('0,963 150,966 200,970 250,965 300,925 350,925 400,912 470,905 510,885 570,852 660,852 690,841 740,841 790,848 897,849 923,874 975,905 1055,905 1100,903 1130,885 1190,880 1300,880 1325,865 1349,800 1375,764'),
  ...C('187,914 250,914 285,845 316,751 382,751 415,718 450,645 478,613 513,592 545,480 575,377 609,377 642,372 677,369 692,350 707,325 740,305 820,305 838,310 872,363')], COLOR.conv, 4);
line([...A('36,936 60,940 87,985 140,982 167,945 195,943 222,925 260,915 300,905 380,905 405,940 430,943 450,958 500,950 530,960 560,970 620,975 700,975 780,955 840,960 895,968 915,982 945,987 965,968 1020,965 1048,1001 1080,950 1105,943 1130,965 1165,915 1185,890 1208,881 1235,890 1263,927 1290,905 1343,897 1370,870 1394,880 1450,830 1474,893 1502,882 1530,893 1555,860'),
  ...B('0,852 40,856 93,912 121,895 148,888 173,905 200,912 228,895 256,905 275,918 340,915 390,925 430,885 470,870 495,843 520,855 560,893 600,885 625,905 650,880 668,820 681,733 708,685 736,740 761,746 788,500 816,427 840,431 868,427 895,330 923,280 947,248 975,246 1002,28 1028,158 1055,200 1082,103 1109,290 1134,272 1161,313 1189,279 1215,262 1242,262 1269,322 1296,223 1320,243 1349,313 1377,339')], COLOR.lag, 2);
line([...A('36,916 87,912 120,900 190,884 240,880 300,885 370,900 410,904 433,914 500,928 540,932 620,937 670,945 760,953 860,965 930,963 1000,958 1050,945 1400,943 1420,952 1560,958'),
  ...B('0,962 150,967 260,963 330,950 400,945 470,938 540,923 600,908 680,893 760,880 860,884 1000,884 1100,891 1300,893'),
  ...C('120,1044 215,1020 285,990 347,940 415,885 513,790 609,680 707,583 774,520 838,475 872,455')], COLOR.mid, 4);
line([...A('36,744 60,748 100,754 140,755 170,765 205,773 260,775 290,780 330,795 357,813 405,838 433,853 485,861 530,853 650,853 690,864 720,877 790,888 860,916 880,917 915,908 970,908 1045,889 1100,893 1300,895 1400,895 1480,908 1530,918 1560,930'),
  ...B('0,932 50,942 150,945 235,943 275,930 320,893 370,886 450,877 520,855 570,828 660,823 740,823 830,833 1055,834 1110,848 1190,843 1230,853 1325,857 1345,830 1357,795 1385,750 1415,720'),
  ...C('262,838 285,790 347,620 400,535 450,430 478,365 515,308 545,230 575,160 609,120 642,75 670,66 707,66 740,78 774,103 805,120 838,127 872,166')], COLOR.band, 4);

// candles: direction, high, top, bottom, low
const candles = `r935,965,967,990 b925,941,950,970 b920,933,974,985 r905,922,956,956 r840,870,941,945 r855,858,888,900 b848,858,878,900 b880,888,944,944 b905,913,920,928 r890,897,936,942
b862,887,890,908 b873,885,907,910 b885,897,925,944 b920,927,948,952 b915,926,929,937 b915,918,942,945 b930,933,1000,1006 r985,996,998,1010 r980,998,1004,1012 b983,990,995,1002
r965,968,993,1000 b960,970,990,997 r970,975,1004,1012 r952,968,972,983 b966,972,975,982 r925,933,966,970 b922,926,942,945 b935,952,989,999 b955,963,981,990 b962,970,986,990
r937,945,981,987 r940,942,952,965 r900,920,943,955 r873,908,911,930 b897,908,936,945 r898,920,936,940 r900,910,913,928 r893,905,907,935 b896,905,909,913 b912,916,944,948
r930,937,948,952 b938,941,962,965 b938,942,950,957 b940,945,960,966 b942,947,955,962 b957,963,974,982 r965,971,986,988 r957,967,969,976 b960,964,969,982 b967,972,976,982
b966,972,976,985 r958,960,974,976 r945,953,970,972 b955,963,966,982 r942,953,970,974 r930,953,957,970 b938,941,963,966 b948,953,960,965 b960,970,980,985 b967,974,983,990
r955,958,984,986 r950,957,966,970 b950,953,969,975 b960,963,1004,1014 r945,948,985,1000 r930,935,956,960 b930,935,966,968 r920,932,974,976 r880,893,921,925 r832,878,890,900
b873,875,893,900 b885,893,928,930 r903,905,926,932 b898,905,914,920 r893,897,914,930 r862,866,886,896 b842,882,885,893 r850,855,886,890 r810,828,851,855 b776,832,896,905
r870,881,884,893 b865,867,896,905 r836,855,907,910 b785,814,858,872 r835,857,860,868 b845,848,885,890 b890,893,914,914 r895,896,914,914 r877,886,892,908 b885,888,906,908
b896,909,913,918 r885,891,914,916 b880,884,902,908 b883,896,928,932 r905,911,920,928 r910,916,925,928 r900,904,921,937 b895,905,914,916 r895,905,929,932 r868,870,899,905
b852,857,888,895 r822,838,884,890 b822,828,861,875 b850,861,890,902 b862,871,898,900 r864,880,893,897 b872,875,903,905 b884,893,909,912 r667,732,835,851 b615,684,686,719
b701,706,741,790 b626,649,749,757 r476,500,681,705 r292,424,441,488 r307,432,486,487 b357,368,426,442 r315,326,437,468
r213,278,351,381 r135,247,268,341 b202,217,250,303 r-30,27,238,268 b-26,53,156,164 b172,181,201,242 r48,101,119,161 b154,158,290,291 r251,269,291,322 b240,278,314,344
r247,278,320,328 b233,263,265,300 r213,263,265,291 b255,255,324,381 r215,220,340,386 r56,243,266,270 b252,258,315,345 b284,305,340,344`.trim().split(/\s+/);
candles.forEach((s, i) => {
  const c = s[0] === 'r' ? COLOR.up : COLOR.down;
  const [h, t, b, l] = s.slice(1).split(',').map(v => +(200 + v / 3).toFixed(1));
  const x = Math.floor(FIRST + i * STEP) + 0.5;
  seg(x, h, x, l, c);
  rect(x - 4.5, t, 9, Math.max(1, b - t).toFixed(1), c);
});

// selected range, drawn in inverted colours
rect(1430.5, 185.5, 43, 125, '#1f5cbc', 'stroke="#0000ff"');
line(C('874,166 905,208 936,230 970,235 1003,240'), '#0aa34a', 3);
line(C('880,460 905,430 940,415 1000,406'), '#3aa890', 3);
line(C('874,364 905,370 936,373 1003,374'), '#f030c0', 3);
rect(1431, 285, 4, 24, '#f4f890');
rect(1437, 273, 9, 37, '#0cb850');
seg(1452, 219, 1452, 288, '#0aa34a');
rect(1447, 281, 9, 8, '#0cb850');
rect(1458, 286, 9, 19, '#f4f890');
rect(1470, 302, 3, 8, '#f4f890');

// annotations
text(1160, 199, '최고 40,450 (03/27)', '#ff0000');
out.push('<path stroke="#f00" stroke-width="1.500" fill="#f00" d="M1299 195.500h12v-6l6 6-6 6v-6"/>');
text(539, 540, '최저 16,150 (01/02)', '#0000ff');
out.push('<path stroke="#00f" stroke-width="1.500" fill="#00f" d="M677 535.500h12v-6l6 6-6 6v-6"/>');
text(629, 485, '배당락(0,00%)', '#333');
out.push('<path stroke="#e71a08" fill="#e71a08" d="M678 489v18h-5l5 7 5-7h-5"/>');
text(1433, 182, '40,806,70(8840,09)', '#333', 'class="value"');
text(1409, 325, '31,966,61', '#333', 'class="value"');
text(1612, 480, '19,888,06(0,00)', '#333', 'class="value"');
rect(1710, 480, 7, 7, '#0000ff');

out.push('<g class="summary">');
[['전환선 9: 34,600', COLOR.conv], ['기준선 26: 30,900', COLOR.base], ['후행스팬 26: 31,850', COLOR.lag], ['선행스팬1 9,26: 32,750', COLOR.spanA], ['선행스팬2 52,26: 29,225', COLOR.spanB]]
  .forEach(([s, c], i) => text(1786, 505 + i * 15, s, c));
out.push('</g>');
text(1717, 496, '19,888,06', '#333', 'class="value"');

// legends
const dot = (x, y) => rect(x, y, 5, 8, '#ccc', 'stroke="#777"');
dot(13.5, 157.5); dot(195.5, 157.5); dot(666.5, 157.5); dot(13.5, 581.5); dot(13.5, 750.5);
rect(21.500, 151.500, 164, 18, '#e6e6e6', 'stroke="#bbb"');
[[26, '에스피지 매물대 수(10)', '#444', 'wide'], [209, '전환선 9', COLOR.conv], [276, '기준선 26', COLOR.base], [351, '후행스팬 26', COLOR.lag], [442, '선행스팬1 9,26', COLOR.spanA], [552, '선행스팬2 52,26', COLOR.spanB], [679, 'Bollinger Bands중심선 20,2', COLOR.mid], [878, '상한선', '#ff0000', 'wide']]
  .forEach(([x, s, c, k = '']) => text(x, 166, s, c, `class="${k}"`));
out.push('<path fill="#eee" stroke="#222" d="M15.500 174.500h17v16h-17z"/><path fill="none" stroke="#777" d="M18.500 177.500h11v10h-11zM22 177v11M26 177v11M18 181h12M18 184.500h12"/>');
text(26, 590, 'OBV', COLOR.obv);
text(67, 590, 'Signal 9', '#90208c', 'class="wide"');
text(26, 759, 'Bostian`s Intraday Intensity Index', COLOR.obv, 'class="wide"');

// lower panes
line([...E('25,505 50,503 75,497 97,478 113,473 130,477 150,486 200,473 230,481 275,477 310,490 345,488 420,485 465,477 490,478 505,485 575,478 605,463 635,465 682,455 715,463 740,459 765,463 870,459 910,463 990,457 1040,455 1055,460 1135,456 1150,458 1180,447 1220,447 1253,424 1280,433 1340,430 1358,421 1375,428 1410,412 1430,430 1450,425 1465,430 1482,417 1500,432 1520,428 1550,437 1568,435'),
  ...F('50,436 100,437 180,437 205,430 235,432 253,421 295,432 320,430 357,437 375,355 397,288 411,305 430,367 448,268 467,195 485,254 503,235 525,190 555,119 572,119 592,79 608,97 626,107 645,84 662,97 680,87 698,95 752,76 768,84 788,68 803,97 840,112')], COLOR.obv, 4);
line([...E('22,493 75,497 140,487 200,481 300,481 340,484 575,480 690,463 930,461 1135,457 1230,450 1270,440 1370,433 1415,425 1500,427 1568,430'),
  ...F('150,437 240,430 357,432 411,374 430,372 448,355 467,320 490,303 520,275 555,225 600,170 645,135 700,115 750,98 788,91 820,95 840,100')], '#90208c', 1);
line([...E('22,774 75,778 95,765 110,758 130,758 145,767 225,768 290,771 305,778 455,778 465,773 515,780 600,778 795,782 800,786 935,785 1005,781 1015,785 1080,785 1135,782 1160,778 1195,781 1230,773 1250,784 1290,790 1330,789 1355,781 1370,785 1410,780 1430,821 1445,815 1465,820 1482,811 1500,826 1568,830'),
  ...F('100,830 110,834 185,834 215,826 235,829 253,823 295,828 357,834 377,752 398,791 411,785 430,903 449,590 467,690 484,768 501,790 520,723 538,690 556,707 573,703 592,571 609,621 645,617 662,644 680,638 698,643 760,643 768,646 788,605 804,685 840,696')], COLOR.obv, 4);

// axes
rect(1791, 149, 83, 749, '#d6e2f0');
rect(8, 874, 1866, 24, '#d6e2f0');
out.push('<g class="axis">');
for (let p = 40000; p >= 15000; p -= 2500) {
  seg(1792, priceY(p), 1799, priceY(p), '#777');
  for (let k = 1; k < 5; k++) seg(1792, priceY(p - k * 500), 1794, priceY(p - k * 500), '#777');
  text(1802, priceY(p) + 4, p.toLocaleString('en-US'));
}
[[592, '175,000K'], [628, '150,000K'], [665, '125,000K'], [702, '100,000K'], [738, '']].forEach(([y, s]) => { seg(1792, y, 1799, y, '#777'); text(1802, y + 3, s); });
for (let y = 599; y < 738; y += 7) seg(1792, y, 1794, y, '#777');
[[773, '50,000M'], [830, '0,00']].forEach(([y, s]) => { seg(1792, y, 1799, y, '#777'); text(1802, y + 3, s); });
for (let y = 750; y < 874; y += 11.5) seg(1792, y, 1794, y, '#777');
text(10, 889, '2022/09');
months.forEach(([x, s]) => { seg(x, 874, x, 897, '#888'); text(x + 1, 889, s); });
text(1801, 889, '04/14');
rect(1800, 320, 70, 13, '#d6e2f0');
rect(1797, 304, 73, 16, '#115bcc');
text(1802, 317, '31,850', '#fff', 'style="fill:#fff"');
text(1802, 332, '-1,85%', '', 'style="fill:#115bcc"');
text(1793, 164, 'LC:97,21', '', 'style="fill:#e71a08"');
text(1793, 179, 'HC:-21,26', '', 'style="fill:#115bcc"');
out.push('</g>');
[574.5, 742.5, 874.5, 897.5].forEach(y => seg(8, y, 1874, y, '#999'));
seg(1791.5, 149, 1791.5, 897, '#888');
out.push('<path fill="none" stroke="#999" d="M8.500 897V149.500H1873.500V897"/>');
[579, 748].forEach(y => { rect(1861, y, 9, 9, '#444'); out.push(`<path stroke="#fff" d="M1863 ${y + 2}l5 5m0-5-5 5"/>`); });
chart.innerHTML = out.join('');

// drawing tools
const wave = '<path stroke="#aaa" stroke-width="1" d="M2 22c4-12 6-6 9-4 3-2 4-10 6-10 2 2 2 10 4 11 2-2 3-9 5-11"/>';
const red = (...p) => p.map(([x, y]) => `<rect x="${x - 1.5}" y="${y - 1.5}" width="3" height="3" fill="#e03030" stroke="none"/>`).join('');
const fill = 'fill="#1c2f78" stroke="none"';
const tools = [
  ['회전', `<path stroke-width="4" d="M5 7h11c4 0 4 4 0 5l-6 2c-3 2-2 6 1 6h10"/><path ${fill} d="M2 7l6-6v12zM26 20l-6-6v12z"/>`],
  ['선택', wave + `<path ${fill} d="M9 3v17l4-4 4 8 3-2-4-7h5z"/>`],
  ['십자', wave + '<path d="M2 13h23M13 2v23"/>' + red([3, 13], [25, 13], [13, 3], [13, 25])],
  ['수평', wave + '<path d="M2 11h23"/>' + red([3, 11], [25, 11])],
  ['수직', wave + '<path d="M14 2v23"/>' + red([14, 3], [14, 25])],
  ['추세', wave + '<path d="M3 18 25 8"/>' + red([3, 18], [25, 8])],
  ['연필', wave + `<path d="M2 19 12 8h8"/><path fill="#f4d9a0" d="M15 8l5-4v8z"/><path ${fill} d="M19 4h7v8h-7z"/>`],
  ['호', '<path stroke="#888" d="M2 20c4-14 18-14 23 0M4 23c4-11 14-11 19 0M2 15c5-9 16-11 24-3"/><path d="M6 4l6 19"/>' + red([6, 4], [12, 23])],
  ['부채', wave + '<path stroke-width="1" d="M10 20 14 3M10 20 22 3M10 20 26 9M10 20h16"/>' + red([10, 20])],
  ['주기', wave + '<path d="M4 2v23M8 2v23M14 2v23M22 2v23"/>'],
  ['패턴', '<path stroke="#aaa" d="M18 9h7M18 13h7M20 17h5"/><path d="M6 22l6-14 6 14"/><g fill="#e05050" stroke="none"><circle cx="6" cy="22" r="2.500"/><circle cx="12" cy="8" r="2.500"/><circle cx="18" cy="22" r="2.500"/></g>'],
  ['격자', '<path stroke-width="1" d="M2 12 12 2M2 24 24 2M14 25l12-11M14 2l12 11M3 3l22 22M2 13l12 12"/>' + red([14, 14])],
  ['상자', wave + '<path d="M2 4h23M2 21h16"/><path stroke-width="1" stroke-dasharray="2 2" d="M2 10h23M2 16h23"/><path fill="#ddd" stroke="#333" d="M18 15h7v9h-7z"/>'],
  ['상자 이동', wave + '<path d="M2 4h23M2 21h16"/><path stroke-width="1" stroke-dasharray="2 2" d="M2 10h23M2 16h23"/><path fill="#ddd" stroke="#333" d="M18 15h7v9h-7zM21 17v5"/>'],
  ['되돌리기', wave + `<path stroke-width="3" d="M7 14V5h13v6"/><path ${fill} d="M2 13h10l-5 7zM15 10h10l-5 6z"/>`],
  ['사각형', '<path fill="#f8b890" stroke="#e08850" d="M4 6h19v16H4z"/>' + wave],
  ['원', '<circle cx="13" cy="14" r="9" fill="#8cc0f0" stroke="#4a90d8"/>' + wave],
  ['문자', wave + '<text x="2" y="16" font-family="Liberation Serif, serif" font-weight="bold" font-size="17" fill="#1c2f78" stroke="none">T</text>'],
  ['도형', wave + '<path fill="#d81818" stroke="none" d="M2 8h8v8H2z"/><circle cx="19" cy="9" r="5" fill="#5a9a98" stroke="none"/><path fill="#1c3f88" stroke="none" d="M17 17l6 8H11z"/>'],
  ['지우개', wave + '<path fill="#fff" stroke="#444" d="M10 15l6-10 6 1 1 6-7 8h-4z"/>'],
  ['전체 지우기', wave + '<path fill="#fff" stroke="#444" d="M10 13l6-10 6 1 1 6-7 8h-4z"/><text x="1" y="25" font-family="Liberation Sans, sans-serif" font-weight="bold" font-size="10" fill="#1c2f78" stroke="none">ALL</text>']
];
document.getElementById('tools').innerHTML = tools.map(([n, d]) => `<button aria-label="${n}"><svg viewBox="0 0 28 28">${d}</svg></button>`).join('');
```
